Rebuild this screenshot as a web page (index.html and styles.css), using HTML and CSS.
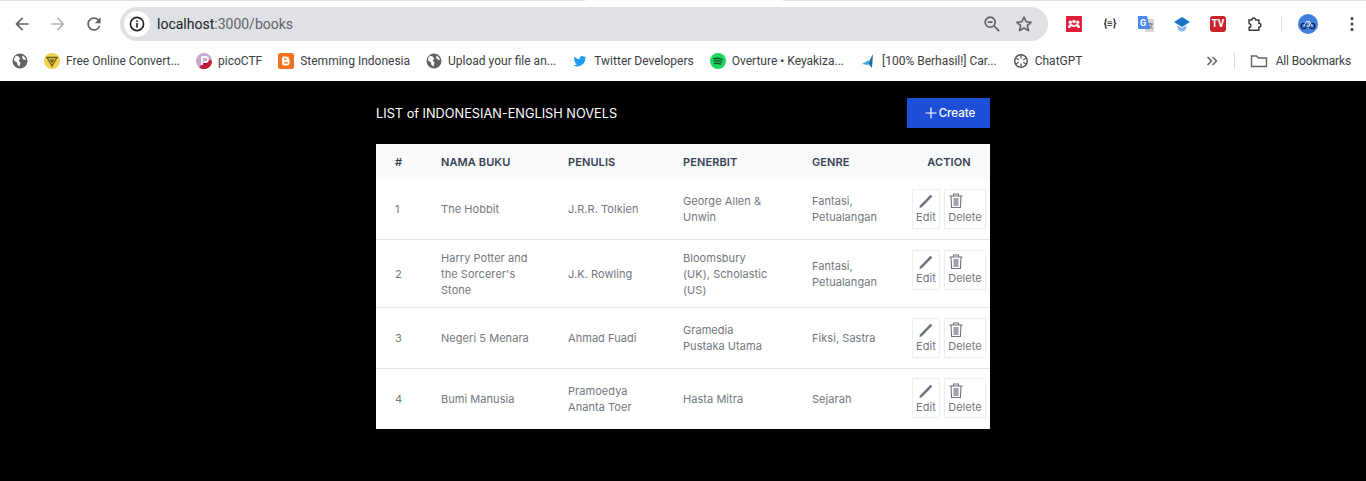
FILE: index.html
```html
<!DOCTYPE html>
<html lang="en">
<head>
  <meta charset="UTF-8">
  <meta name="viewport" content="width=device-width, initial-scale=1.0">
  <title>List of Novels</title>
  <link rel="stylesheet" href="styles.css">
</head>
<body>
  <header class="browser">
    <div class="tab-edge"><span class="edge-grey edge-left"></span><span class="edge-grey edge-right"></span></div>
    <div class="toolbar">
      <div class="nav-buttons">
        <svg class="nav-icon" viewBox="0 0 24 24"><path fill="#5f6368" d="M20 11H7.83l5.59-5.59L12 4l-8 8 8 8 1.41-1.41L7.83 13H20v-2z"/></svg>
        <svg class="nav-icon" viewBox="0 0 24 24"><path fill="#b4b6b9" d="M4 11h12.17l-5.59-5.59L12 4l8 8-8 8-1.41-1.41L16.17 13H4v-2z"/></svg>
        <svg class="nav-icon" viewBox="0 0 24 24"><path fill="#5f6368" d="M17.65 6.35A7.96 7.96 0 0 0 12 4c-4.42 0-7.99 3.58-7.99 8s3.57 8 7.99 8c3.73 0 6.84-2.55 7.73-6h-2.08A5.99 5.99 0 0 1 12 18c-3.31 0-6-2.69-6-6s2.69-6 6-6c1.66 0 3.14.69 4.22 1.78L13 11h7V4l-2.35 2.35z"/></svg>
      </div>
      <div class="address-bar">
        <span class="site-info">
          <svg viewBox="0 0 16 16" width="16" height="16"><circle cx="8" cy="8" r="6.6" fill="none" stroke="#202124" stroke-width="1.6"/><rect x="7.2" y="7" width="1.6" height="4.6" fill="#202124"/><rect x="7.2" y="4.4" width="1.6" height="1.6" fill="#202124"/></svg>
        </span>
        <span class="url"><span class="url-host">localhost</span>:3000/books</span>
        <svg class="addr-icon zoom-icon" viewBox="0 0 18 18"><circle cx="7.2" cy="7.2" r="5" fill="none" stroke="#5f6368" stroke-width="1.7"/><path d="M4.8 7.2h4.8M11 11l5.2 5.2" stroke="#5f6368" stroke-width="1.7" fill="none"/></svg>
        <svg class="addr-icon" viewBox="0 0 18 18"><path d="M9 2l2.1 4.7 5.1.5-3.9 3.4 1.2 5L9 13l-4.500 2.600 1.200-5-3.900-3.400 5.100-.5z" fill="none" stroke="#5f6368" stroke-width="1.6" stroke-linejoin="round"/></svg>
      </div>
      <div class="extensions">
        <svg class="ext" viewBox="0 0 16 16"><rect width="16" height="16" fill="#e0203a"/><circle cx="8" cy="5.500" r="1.700" fill="#fff"/><circle cx="4.300" cy="6.300" r="1.700" fill="#fff"/><circle cx="11.700" cy="6.300" r="1.700" fill="#fff"/><path d="M2 12c0-3 1.500-4 3-4 1 0 2 .5 3 1.500 1-1 2-1.500 3-1.500 1.500 0 3 1 3 4h-2.500c0-1-.5-1.700-1-1.700S9.500 11 8 11s-2.500-.7-3-.7-.5.7-.5 1.700z" fill="#fff"/></svg>
        <span class="ext ext-json">{≡}</span>
        <svg class="ext" viewBox="0 0 16 16"><rect x="7" y="3" width="9" height="13" fill="#d5d7da"/><path d="M0 0h9l3 13H1a1 1 0 0 1-1-1z" fill="#4a8af4"/><text x="2" y="10" class="ext-g">G</text><path d="M10 8h5M12.500 7v1M14 8c-.6 2-2 3.500-3.500 4.500M11 9.500c.8 1.200 2 2.300 3.500 3" fill="none" stroke="#6b7076" stroke-width="1"/></svg>
        <svg class="ext" viewBox="0 0 16 16"><path d="M8 1l8 5-8 5-8-5z" fill="#1a73c8"/><path d="M3.500 9.500V11a4.500 4.500 0 0 0 9 0V9.500L8 12z" fill="#8ab4ea"/></svg>
        <span class="ext ext-tv">TV</span>
        <svg class="ext" viewBox="0 0 18 18"><path d="M3 4.500h3.500a2.200 2.200 0 0 1 4.400 0h3.600v3.600a2.200 2.200 0 0 1 0 4.400v3.500H3.500v-3.300a2 2 0 0 0 0-4V5z" fill="none" stroke="#3c4043" stroke-width="1.700" stroke-linejoin="round"/></svg>
        <span class="toolbar-sep"></span>
        <svg class="avatar" viewBox="0 0 20 20"><circle cx="10" cy="10" r="10" fill="#3f7fe0"/><circle cx="5.800" cy="12" r="2.600" fill="none" stroke="#16233f" stroke-width="1.200"/><circle cx="14.200" cy="12" r="2.600" fill="none" stroke="#16233f" stroke-width="1.200"/><path d="M5.800 12l2.700-4.500h3l2.700 4.500M8 12h4l-1.500-4.500" fill="none" stroke="#e3ecfb" stroke-width="1"/></svg>
        <svg class="menu-dots" viewBox="0 0 4 16"><circle cx="2" cy="2.500" r="1.500" fill="#3c4043"/><circle cx="2" cy="8" r="1.500" fill="#3c4043"/><circle cx="2" cy="13.500" r="1.500" fill="#3c4043"/></svg>
      </div>
    </div>
    <nav class="bookmarks">
      <div class="bookmark-list">
        <span class="bookmark"><svg class="fav" viewBox="0 0 16 16"><circle cx="8" cy="8" r="7.500" fill="#5f6368"/><path d="M4 2.800c2 .2 3.500 1.200 4 2.700L6.800 8 8.500 9.500 7.500 13.500 5.500 12 5 9.500 2 7.500c0-2 .8-3.500 2-4.700zM10.500 2.500c2 1 3.200 2.800 3.500 4.500l-2.500-.5-1.500-2z" fill="#fff"/></svg></span>
        <span class="bookmark"><svg class="fav" viewBox="0 0 16 16"><circle cx="8" cy="8" r="8" fill="#f1d44f"/><path d="M3 4.500h10L8 13z" fill="none" stroke="#6b5c1d" stroke-width="1.300"/><path d="M5.500 6.500h5L8 10.500z" fill="#6b5c1d"/></svg><span>Free Online Convert...</span></span>
        <span class="bookmark"><svg class="fav" viewBox="0 0 16 16"><circle cx="8" cy="8" r="8" fill="#c9a6d4"/><path d="M16 8a8 8 0 0 1-13 6.200L12 6z" fill="#c2183c"/><path d="M6 12V4h3.500a2.500 2.500 0 0 1 0 5H7.500" fill="none" stroke="#fff" stroke-width="1.800"/></svg><span>picoCTF</span></span>
        <span class="bookmark"><svg class="fav" viewBox="0 0 16 16"><rect width="16" height="16" rx="2.500" fill="#f4711e"/><path d="M5.500 3.500h3A2.500 2.500 0 0 1 11 6v1h.5v3A2.500 2.500 0 0 1 9 12.500H6.500A2.500 2.500 0 0 1 4 10V5A1.500 1.500 0 0 1 5.500 3.500z" fill="#fff"/><path d="M6 6.200h2.500M6 9.800h4" stroke="#f4711e" stroke-width="1.200"/></svg><span>Stemming Indonesia</span></span>
        <span class="bookmark"><svg class="fav" viewBox="0 0 16 16"><circle cx="8" cy="8" r="7.500" fill="#5f6368"/><path d="M4 2.800c2 .2 3.500 1.200 4 2.700L6.800 8 8.500 9.500 7.500 13.500 5.500 12 5 9.500 2 7.500c0-2 .8-3.500 2-4.700zM10.500 2.500c2 1 3.200 2.800 3.500 4.500l-2.500-.5-1.500-2z" fill="#fff"/></svg><span>Upload your file an...</span></span>
        <span class="bookmark"><svg class="fav" viewBox="-3 -3 30 30"><path fill="#1d9bf0" d="M23.500 4.800c-.9.400-1.800.7-2.800.8 1-.6 1.800-1.500 2.100-2.700-.9.600-2 1-3.100 1.200a4.900 4.900 0 0 0-8.300 4.500C7.400 8.400 3.800 6.400 1.400 3.500a4.900 4.900 0 0 0 1.500 6.500c-.8 0-1.500-.2-2.200-.6 0 2.400 1.700 4.400 3.900 4.900-.7.200-1.500.2-2.200.1.600 2 2.400 3.400 4.600 3.400A9.900 9.900 0 0 1 0 19.800 14 14 0 0 0 21.500 7.400c1-.7 1.800-1.600 2-2.600z"/></svg><span>Twitter Developers</span></span>
        <span class="bookmark"><svg class="fav" viewBox="0 0 16 16"><circle cx="8" cy="8" r="8" fill="#1ed760"/><path d="M3.500 5.800c3-.9 6.300-.6 9 .9M4 8.200c2.600-.7 5.400-.5 7.700.8M4.500 10.500c2.200-.5 4.400-.3 6.300.7" fill="none" stroke="#14542f" stroke-width="1.300" stroke-linecap="round"/></svg><span>Overture • Keyakiza...</span></span>
        <span class="bookmark"><svg class="fav" viewBox="0 0 16 16"><path d="M13 1l-1 14-4-4.500z" fill="#1d6fa5"/><path d="M2 11l7-4-1 5z" fill="#3ba7dc"/></svg><span>[100% Berhasil!] Car...</span></span>
        <span class="bookmark"><svg class="fav" viewBox="0 0 16 16"><circle cx="8" cy="8" r="6.300" fill="none" stroke="#4a4d50" stroke-width="1.400"/><path d="M8 2.500v11M3.200 5.200l9.600 5.600M12.800 5.200l-9.600 5.600" stroke="#4a4d50" stroke-width="1.200"/><circle cx="8" cy="8" r="2.500" fill="#fff"/></svg><span>ChatGPT</span></span>
      </div>
      <div class="bookmark-end">
        <svg class="chevrons" viewBox="0 0 12 10"><path d="M1.500 1l4 4-4 4M6.500 1l4 4-4 4" fill="none" stroke="#5f6368" stroke-width="1.500"/></svg>
        <span class="bookmark-sep"></span>
        <span class="bookmark bookmark-all"><svg class="fav folder" viewBox="0 0 18 16"><path d="M1.500 13.500V3h5l2 2h8v8.500z" fill="none" stroke="#5f6368" stroke-width="1.400"/></svg><span>All Bookmarks</span></span>
      </div>
    </nav>
  </header>

  <main class="content">
    <div class="page-head">
      <h1>LIST of INDONESIAN-ENGLISH NOVELS</h1>
      <button class="btn-create"><svg viewBox="0 0 12 12" width="12" height="12"><path d="M6 .5v11M.5 6h11" stroke="#fff" stroke-width="1.200"/></svg>Create</button>
    </div>
    <table class="books">
      <thead>
        <tr>
          <th class="col-no">#</th>
          <th class="col-name">NAMA BUKU</th>
          <th class="col-author">PENULIS</th>
          <th class="col-pub">PENERBIT</th>
          <th class="col-genre">GENRE</th>
          <th class="col-action">ACTION</th>
        </tr>
      </thead>
      <tbody>
        <tr>
          <td class="cell-no">1</td><td>The Hobbit</td><td>J.R.R. Tolkien</td><td class="cell-pub">George Allen &amp; Unwin</td><td>Fantasi, Petualangan</td>
          <td class="cell-action"><div class="actions">
            <button class="btn-row btn-edit"><svg class="ico" viewBox="0 0 16 16"><path d="M1.500 15L2 12.500 12.500 1.800l1.800 1.800L3.800 14.300z" fill="#6b7280"/></svg>Edit</button>
            <button class="btn-row btn-del"><svg class="ico" viewBox="0 0 16 16"><path d="M5.500 2.500V1h5v1.500M1.500 3h13M3 3l.6 11.500h8.800L13 3" fill="none" stroke="#6b7280" stroke-width="1.100"/><path d="M5.500 5h5v8h-5z" fill="#9ca3af"/></svg>Delete</button>
          </div></td>
        </tr>
        <tr>
          <td class="cell-no">2</td><td>Harry Potter and the Sorcerer's Stone</td><td>J.K. Rowling</td><td class="cell-pub">Bloomsbury (UK), Scholastic (US)</td><td>Fantasi, Petualangan</td>
          <td class="cell-action"><div class="actions">
            <button class="btn-row btn-edit"><svg class="ico" viewBox="0 0 16 16"><path d="M1.500 15L2 12.500 12.500 1.800l1.800 1.800L3.800 14.300z" fill="#6b7280"/></svg>Edit</button>
            <button class="btn-row btn-del"><svg class="ico" viewBox="0 0 16 16"><path d="M5.500 2.500V1h5v1.500M1.500 3h13M3 3l.6 11.500h8.800L13 3" fill="none" stroke="#6b7280" stroke-width="1.100"/><path d="M5.500 5h5v8h-5z" fill="#9ca3af"/></svg>Delete</button>
          </div></td>
        </tr>
        <tr>
          <td class="cell-no">3</td><td>Negeri 5 Menara</td><td>Ahmad Fuadi</td><td class="cell-pub">Gramedia Pustaka Utama</td><td>Fiksi, Sastra</td>
          <td class="cell-action"><div class="actions">
            <button class="btn-row btn-edit"><svg class="ico" viewBox="0 0 16 16"><path d="M1.500 15L2 12.500 12.500 1.800l1.800 1.800L3.800 14.300z" fill="#6b7280"/></svg>Edit</button>
            <button class="btn-row btn-del"><svg class="ico" viewBox="0 0 16 16"><path d="M5.500 2.500V1h5v1.500M1.500 3h13M3 3l.6 11.500h8.800L13 3" fill="none" stroke="#6b7280" stroke-width="1.100"/><path d="M5.500 5h5v8h-5z" fill="#9ca3af"/></svg>Delete</button>
          </div></td>
        </tr>
        <tr>
          <td class="cell-no">4</td><td>Bumi Manusia</td><td>Pramoedya Ananta Toer</td><td class="cell-pub">Hasta Mitra</td><td>Sejarah</td>
          <td class="cell-action"><div class="actions">
            <button class="btn-row btn-edit"><svg class="ico" viewBox="0 0 16 16"><path d="M1.500 15L2 12.500 12.500 1.800l1.800 1.800L3.800 14.300z" fill="#6b7280"/></svg>Edit</button>
            <button class="btn-row btn-del"><svg class="ico" viewBox="0 0 16 16"><path d="M5.500 2.500V1h5v1.500M1.500 3h13M3 3l.6 11.500h8.800L13 3" fill="none" stroke="#6b7280" stroke-width="1.100"/><path d="M5.500 5h5v8h-5z" fill="#9ca3af"/></svg>Delete</button>
          </div></td>
        </tr>
      </tbody>
    </table>
  </main>
</body>
</html>
```

FILE: styles.css
```css
* {
  box-sizing: border-box;
}

html,
body {
  margin: 0;
  padding: 0;
  background-color: #000;
}

body {
  font-family: Inter, "Liberation Sans", sans-serif;
  overflow: hidden;
}

/* browser chrome */
.browser {
  background-color: #fff;
  height: 81px;
  font-family: Roboto, "Liberation Sans", sans-serif;
}

.tab-edge {
  display: flex;
  justify-content: space-between;
  height: 1px;
}

.edge-grey {
  background-color: #dee1e6;
}

.edge-left {
  width: 585px;
}

.edge-right {
  width: 583px;
}

.toolbar {
  display: flex;
  align-items: center;
  height: 34px;
  margin-top: 6px;
}

.nav-buttons {
  display: flex;
  gap: 16px;
  width: 120px;
  padding-left: 12px;
}

.nav-icon {
  width: 20px;
  height: 20px;
}

.address-bar {
  display: flex;
  align-items: center;
  width: 928px;
  height: 34px;
  padding-left: 4px;
  padding-right: 15px;
  border-radius: 17px;
  background-color: #dfe1e5;
}

.site-info {
  display: flex;
  align-items: center;
  justify-content: center;
  width: 26px;
  height: 26px;
  border-radius: 50%;
  background-color: #fff;
}

.url {
  flex: 1;
  margin-left: 7px;
  font-size: 14px;
  color: #5f6368;
}

.url-host {
  color: #202124;
}

.addr-icon {
  width: 18px;
  height: 18px;
}

.zoom-icon {
  margin-right: 14px;
}

.extensions {
  display: flex;
  align-items: center;
  flex: 1;
  padding-left: 18px;
}

.ext {
  width: 16px;
  height: 16px;
  margin-right: 20px;
  flex: none;
}

.ext-json {
  font-size: 10px;
  font-weight: 700;
  line-height: 16px;
  text-align: center;
  color: #202124;
  white-space: nowrap;
}

.ext-g {
  font-size: 9px;
  font-weight: 700;
  fill: #fff;
}

.ext-tv {
  border-radius: 3px;
  background-color: #c8232c;
  color: #fff;
  font-size: 10px;
  font-weight: 700;
  line-height: 16px;
  text-align: center;
}

.toolbar-sep {
  width: 1px;
  height: 16px;
  margin-left: -1px;
  margin-right: 16px;
  background-color: #dadce0;
}

.avatar {
  width: 20px;
  height: 20px;
  margin-right: 32px;
}

.menu-dots {
  width: 4px;
  height: 16px;
}

.bookmarks {
  display: flex;
  align-items: center;
  justify-content: space-between;
  height: 40px;
  padding: 0 15px 0 12px;
  font-size: 12px;
  color: #3c4043;
}

.bookmark-list {
  display: flex;
  align-items: center;
  gap: 16px;
}

.bookmark {
  display: flex;
  align-items: center;
  gap: 6px;
  white-space: nowrap;
}

.bookmark-all {
  gap: 8px;
  letter-spacing: -0.15px;
}

.fav {
  width: 16px;
  height: 16px;
  flex: none;
}

.folder {
  width: 18px;
}

.bookmark-end {
  display: flex;
  align-items: center;
}

.chevrons {
  width: 12px;
  height: 10px;
}

.bookmark-sep {
  width: 1px;
  height: 16px;
  margin: 0 15px 0 16px;
  background-color: #dadce0;
}

/* page */
.content {
  width: 614px;
  margin: 0 auto;
  padding-top: 17px;
}

.page-head {
  display: flex;
  align-items: center;
  justify-content: space-between;
  height: 30px;
  margin-bottom: 16px;
}

.page-head h1 {
  margin: 0;
  font-size: 12.75px;
  font-weight: 400;
  color: #fff;
}

.btn-create {
  display: flex;
  align-items: center;
  justify-content: center;
  gap: 2px;
  width: 83px;
  height: 30px;
  padding: 0 0 0 3px;
  border: none;
  background-color: #1d4ed8;
  color: #fff;
  font-family: inherit;
  font-size: 11.5px;
  font-weight: 500;
}

.books {
  width: 100%;
  table-layout: fixed;
  border-collapse: separate;
  border-spacing: 0;
  background-color: #fff;
  font-size: 11px;
  line-height: 16px;
  letter-spacing: 0.05px;
  color: #74777d;
}

.books th {
  height: 36px;
  padding: 0 16px;
  background-color: #f9fafb;
  color: #374151;
  font-size: 11px;
  font-weight: 600;
  letter-spacing: 0.1px;
  text-align: left;
}

.books td {
  padding: 10px 16px;
  box-shadow: inset 0 -1px 0 #e5e7eb;
}

.books tbody tr:first-child td {
  padding-top: 9px;
  padding-bottom: 11px;
}

.books tbody tr:nth-child(3) td {
  padding-bottom: 11px;
}

.books tbody tr:last-child td {
  box-shadow: none;
}

.books .col-no {
  width: 49px;
  padding: 0 0 0 19px;
}

.books .col-name {
  width: 127px;
}

.books .col-author {
  width: 115px;
}

.books .col-pub {
  width: 129px;
}

.books .col-genre {
  width: 112px;
}

.books .col-action {
  padding: 0;
  text-align: center;
}

.books td.cell-no {
  padding-left: 19px;
  padding-right: 0;
}

/* publisher names wrap earlier than the other columns */
.books td.cell-pub {
  padding-right: 24px;
}

.books td.cell-action {
  padding-left: 4px;
  padding-right: 4px;
  vertical-align: top;
}

.books tbody tr:last-child td.cell-action {
  padding-top: 9px;
  padding-bottom: 11px;
}

.actions {
  display: flex;
  gap: 4px;
}

.btn-row {
  display: flex;
  flex-direction: column;
  align-items: center;
  height: 40px;
  padding: 3px 0 0;
  border: 1px solid #eceef1;
  background-color: #fff;
  color: #74777d;
  font-family: inherit;
  font-size: 11px;
  line-height: 16px;
  letter-spacing: 0.05px;
}

.books tbody tr:last-child .btn-row {
  padding-top: 4px;
}

.btn-edit {
  width: 28px;
}

.btn-del {
  width: 42px;
}

.ico {
  width: 16px;
  height: 16px;
  flex: none;
}

.btn-del .ico {
  align-self: flex-start;
  margin-left: 3px;
}
```
